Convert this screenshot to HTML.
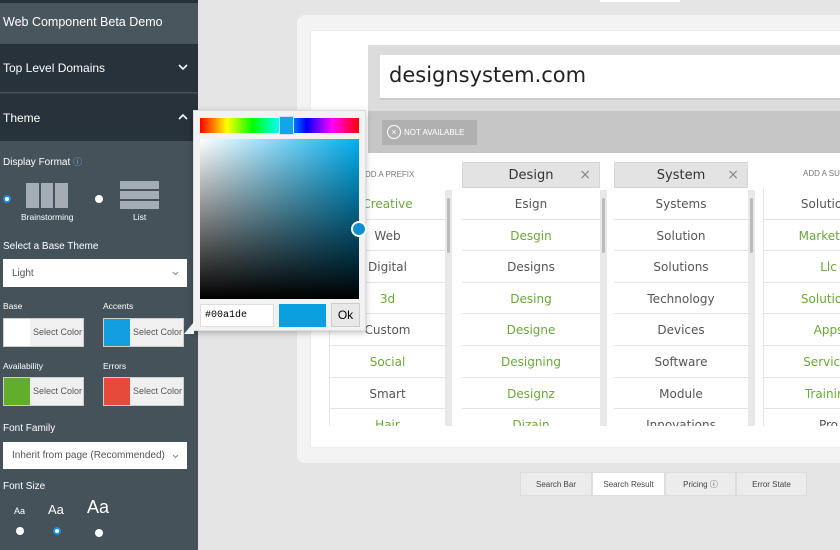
<!DOCTYPE html>
<html><head><meta charset="utf-8"><style>
*{box-sizing:border-box;margin:0;padding:0}
body{width:840px;height:550px;overflow:hidden;background:#e5e5e5;font-family:"Liberation Sans",sans-serif;position:relative}
.a{position:absolute}
#sb{left:0;top:0;width:198px;height:550px;background:#46525a;color:#fff}
.row{position:absolute;left:0;width:198px;background:#28323a;font-size:12px;padding-left:3px}
.lbl{position:absolute;font-size:10px;color:#fff;white-space:nowrap}
.sw{position:absolute;width:81px;height:29px;background:#f0f0f0;border:1px solid #ccc;font-size:9px;color:#555;white-space:nowrap;overflow:hidden}
.sw i{position:absolute;left:0;top:0;width:26px;height:27px}
.sw span{position:absolute;left:29px;top:8px}
.dd{position:absolute;left:3px;width:184px;background:#fff;font-size:10px;color:#555;padding-left:9px}
.rad{position:absolute;width:8px;height:8px;border-radius:50%;background:#fff}
.rad.on{border:2px solid #1b8fe0;background:#fff}
.col{position:absolute;background:#fff}
.cell{height:31.6px;border-bottom:1px solid #e4e4e4;text-align:center;font-size:12px;line-height:33px;color:#555;font-family:"DejaVu Sans",sans-serif;white-space:nowrap}
.g{color:#6aa83a}
.sc{position:absolute;width:7px;background:#e8e8e8}
.sc i{position:absolute;left:2px;width:3px;background:#bbb;border-radius:2px}
.hd{position:absolute;height:26px;background:#e3e3e3;border:1px solid #d5d5d5;font-size:13px;color:#333;text-align:center;line-height:25px;font-family:"DejaVu Sans",sans-serif}
.hd b{position:absolute;right:8px;top:0;font-weight:normal;color:#888;font-size:14px}
.tab{position:absolute;top:472px;height:24px;background:#ececec;border:1px solid #ddd;font-size:8px;color:#444;text-align:center;line-height:23px}
</style></head><body>
<div id="sb" class="a">
 <div class="a" style="left:0;top:0;width:198px;height:3px;background:#26313a"></div>
 <div class="a" style="left:0;top:3px;width:198px;height:40px;background:#4a565e"></div>
 <div class="a" style="left:3px;top:15px;font-size:12.5px">Web Component Beta Demo</div>
 <div class="row" style="top:44px;height:48px;line-height:48px">Top Level Domains</div>
 <svg class="a" style="left:178px;top:64px" width="10" height="7"><path d="M1 1l4 4 4-4" stroke="#fff" stroke-width="1.6" fill="none"/></svg>
 <div class="row" style="top:93px;height:48px;line-height:48px;border-top:1px solid #36414a">Theme</div>
 <svg class="a" style="left:178px;top:113px" width="10" height="7"><path d="M1 6l4-4 4 4" stroke="#fff" stroke-width="1.6" fill="none"/></svg>
 <div class="lbl" style="left:3px;top:155px">Display Format <span style="color:#6ab4ec;font-size:9px">&#9432;</span></div>
 <div class="rad on" style="left:3px;top:195px"></div>
 <div class="a" style="left:26px;top:183px;width:13px;height:25px;background:#a5adb4"></div>
 <div class="a" style="left:41px;top:183px;width:12px;height:25px;background:#a5adb4"></div>
 <div class="a" style="left:55px;top:183px;width:13px;height:25px;background:#a5adb4"></div>
 <div class="lbl" style="left:21px;top:212px;font-size:8.5px">Brainstorming</div>
 <div class="rad" style="left:95px;top:195px"></div>
 <div class="a" style="left:120px;top:181px;width:39px;height:8px;background:#a5adb4"></div>
 <div class="a" style="left:120px;top:191px;width:39px;height:8px;background:#a5adb4"></div>
 <div class="a" style="left:120px;top:201px;width:39px;height:8px;background:#a5adb4"></div>
 <div class="lbl" style="left:133px;top:212px;font-size:8.5px">List</div>
 <div class="lbl" style="left:3px;top:241px">Select a Base Theme</div>
 <div class="dd" style="top:259px;height:28px;line-height:30px">Light</div>
 <svg class="a" style="left:172px;top:271px" width="7" height="5"><path d="M1 1l2.5 2.5L6 1" stroke="#888" fill="none"/></svg>
 <div class="lbl" style="left:3px;top:301px;font-size:8.5px">Base</div>
 <div class="lbl" style="left:103px;top:301px;font-size:8.5px">Accents</div>
 <div class="sw" style="left:3px;top:318px"><i style="background:#fff"></i><span>Select Color</span></div>
 <div class="sw" style="left:103px;top:318px"><i style="background:#129ee0"></i><span>Select Color</span></div>
 <div class="lbl" style="left:3px;top:361px;font-size:8.5px">Availability</div>
 <div class="lbl" style="left:103px;top:361px;font-size:8.5px">Errors</div>
 <div class="sw" style="left:3px;top:377px"><i style="background:#62ae2c"></i><span>Select Color</span></div>
 <div class="sw" style="left:103px;top:377px"><i style="background:#e54a3a"></i><span>Select Color</span></div>
 <div class="lbl" style="left:3px;top:423px">Font Family</div>
 <div class="dd" style="top:442px;height:27px;line-height:28px">Inherit from page (Recommended)</div>
 <svg class="a" style="left:172px;top:454px" width="7" height="5"><path d="M1 1l2.5 2.5L6 1" stroke="#888" fill="none"/></svg>
 <div class="lbl" style="left:3px;top:481px">Font Size</div>
 <div class="lbl" style="left:14px;top:506px;font-size:9px">Aa</div>
 <div class="lbl" style="left:48px;top:502px;font-size:13px">Aa</div>
 <div class="lbl" style="left:87px;top:497px;font-size:18px">Aa</div>
 <div class="rad" style="left:16px;top:527px"></div>
 <div class="rad on" style="left:53px;top:527px"></div>
 <div class="rad" style="left:95px;top:529px"></div>
</div>
<div class="a" style="left:600px;top:0;width:80px;height:2px;background:#fff"></div>
<div class="a" style="left:297px;top:15px;width:560px;height:448px;background:#f3f3f3;border-radius:8px"></div>
<div class="a" style="left:310px;top:30px;width:540px;height:418px;background:#fff;border:1px solid #ececec"></div>
<div class="a" style="left:368px;top:45px;width:480px;height:108px;background:#dcdcdc"></div>
<div class="a" style="left:380px;top:55px;width:470px;height:45px;background:#fff;border-bottom:2px solid #ccc"></div>
<div class="a" style="left:389px;top:63px;font-size:21px;color:#222;font-family:'DejaVu Sans',sans-serif">designsystem.com</div>
<div class="a" style="left:368px;top:111px;width:480px;height:42px;background:#c6c6c6"></div>
<div class="a" style="left:382px;top:120px;width:95px;height:25px;background:#b0b0b0;color:#fff;font-size:8px;line-height:25px;padding-left:22px;white-space:nowrap">NOT AVAILABLE</div>
<div class="a" style="left:387px;top:125px;width:14px;height:14px;border:1px solid #fff;border-radius:50%;color:#fff;font-size:9px;line-height:12px;text-align:center">&#215;</div>
<div class="a" style="left:365px;top:170px;font-size:8px;color:#777;white-space:nowrap">DD A PREFIX</div>
<div class="a" style="left:803px;top:169px;font-size:8px;color:#777;white-space:nowrap">ADD A SUFFIX</div>
<div class="col" style="left:329px;top:188px;width:116px;height:238px;overflow:hidden;border-left:1px solid #e4e4e4">
<div class="cell g">Creative</div><div class="cell">Web</div><div class="cell">Digital</div><div class="cell g">3d</div><div class="cell">Custom</div><div class="cell g">Social</div><div class="cell">Smart</div><div class="cell g">Hair</div></div>
<div class="sc" style="left:445px;top:190px;height:236px"><i style="top:8px;height:55px"></i></div>
<div class="hd" style="left:462px;top:162px;width:138px">Design<b>&#215;</b></div>
<div class="col" style="left:462px;top:188px;width:138px;height:238px;overflow:hidden">
<div class="cell">Esign</div><div class="cell g">Desgin</div><div class="cell">Designs</div><div class="cell g">Desing</div><div class="cell g">Designe</div><div class="cell g">Designing</div><div class="cell g">Designz</div><div class="cell g">Dizain</div></div>
<div class="sc" style="left:600px;top:190px;height:236px"><i style="top:8px;height:55px"></i></div>
<div class="hd" style="left:614px;top:162px;width:134px">System<b>&#215;</b></div>
<div class="col" style="left:614px;top:188px;width:134px;height:238px;overflow:hidden">
<div class="cell">Systems</div><div class="cell">Solution</div><div class="cell">Solutions</div><div class="cell">Technology</div><div class="cell">Devices</div><div class="cell">Software</div><div class="cell">Module</div><div class="cell">Innovations</div></div>
<div class="sc" style="left:748px;top:190px;height:236px"><i style="top:8px;height:55px"></i></div>
<div class="col" style="left:763px;top:188px;width:130px;height:238px;overflow:hidden;border-left:1px solid #e4e4e4">
<div class="cell">Solutions</div><div class="cell g">Marketing</div><div class="cell g">Llc</div><div class="cell g">Solutions</div><div class="cell g">Apps</div><div class="cell g">Services</div><div class="cell g">Training</div><div class="cell">Pro</div></div>
<div class="tab" style="left:520px;width:72px">Search Bar</div>
<div class="tab" style="left:592px;width:73px;background:#fff">Search Result</div>
<div class="tab" style="left:665px;width:71px">Pricing &#9432;</div>
<div class="tab" style="left:736px;width:71px">Error State</div>
<!-- picker -->
<div class="a" style="left:193px;top:110px;width:173px;height:221px;background:#f2f2f2;border:1px solid #ddd;box-shadow:0 2px 6px rgba(0,0,0,.25)"></div>
<div class="a" style="left:184px;top:322px;width:0;height:0;border-top:12px solid transparent;border-right:10px solid #f2f2f2"></div>
<div class="a" style="left:200px;top:118px;width:159px;height:15px;background:linear-gradient(90deg,#f00,#ff0 17%,#0f0 33%,#0ff 50%,#00f 67%,#f0f 83%,#f00)"></div>
<div class="a" style="left:279px;top:116px;width:15px;height:19px;background:#12a6e8;border:1px solid #cde"></div>
<div class="a" style="left:200px;top:139px;width:159px;height:160px;background:linear-gradient(to top,#000,rgba(0,0,0,0)),linear-gradient(90deg,#fff,#00aef0)"></div>
<div class="a" style="left:351px;top:221px;width:16px;height:16px;border-radius:50%;background:#0e8fd0;border:2px solid #fff"></div>
<div class="a" style="left:200px;top:304px;width:74px;height:23px;background:#fff;border:1px solid #ddd;font-family:'Liberation Mono',monospace;font-size:10px;line-height:21px;padding-left:4px">#00a1de</div>
<div class="a" style="left:279px;top:304px;width:47px;height:23px;background:#0aa0e0"></div>
<div class="a" style="left:331px;top:303px;width:29px;height:24px;background:#e8e8e8;border:1px solid #ccc;font-size:12px;text-align:center;line-height:22px">Ok</div>
</body></html>
